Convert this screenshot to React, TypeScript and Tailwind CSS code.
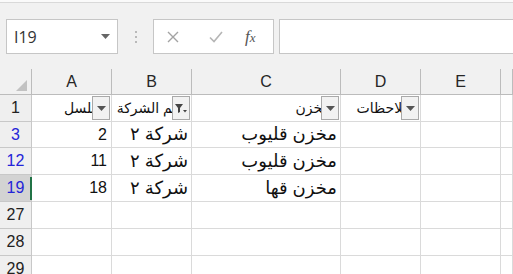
import React from "react";

// Excel sheet snippet: formula bar on top, filtered table with Arabic headers.
const cols = ["A", "B", "C", "D", "E", ""];

type Row = {
  num: string;
  blue?: boolean;
  selected?: boolean;
  cells: string[];
};

const rows: Row[] = [
  { num: "1", cells: ["تسلسل", "اسم الشركة", "مخزن", "ملاحظات", "", ""] },
  { num: "3", blue: true, cells: ["2", "شركة ٢", "مخزن قليوب", "", "", ""] },
  { num: "12", blue: true, cells: ["11", "شركة ٢", "مخزن قليوب", "", "", ""] },
  { num: "19", blue: true, selected: true, cells: ["18", "شركة ٢", "مخزن قها", "", "", ""] },
  { num: "27", cells: ["", "", "", "", "", ""] },
  { num: "28", cells: ["", "", "", "", "", ""] },
  { num: "29", cells: ["", "", "", "", "", ""] },
];

// right padding of the header labels, so the filter button hides the same part as in Excel
const headerPad = ["pr-[3px]", "pr-[3px]", "pr-[10px]", "pr-[10px]"];

function FilterButton({ active }: { active?: boolean }) {
  return (
    <div className="absolute right-[1px] top-[1px] flex h-[24px] w-[18px] items-center justify-center border border-[#a9a9a9] bg-[#f2f2f2]">
      {active ? (
        <svg width="14" height="12" viewBox="0 0 14 12">
          <path d="M1 2h8L6 6v4L4 11V6z" fill="#444" />
          <path d="M9 8h4l-2 2.5z" fill="#444" />
        </svg>
      ) : (
        <svg width="9" height="5" viewBox="0 0 9 5">
          <path d="M0 0h9L4.5 5z" fill="#555" />
        </svg>
      )}
    </div>
  );
}

export default function App() {
  return (
    <div
      className="h-[274px] w-[513px] overflow-hidden bg-[#f1f1f1] text-[#222]"
      style={{ fontFamily: '"Liberation Sans", "DejaVu Sans", sans-serif' }}
    >
      {/* top ribbon edge */}
      <div className="h-[2px] bg-[#fafafa]" />
      <div className="h-[1px] bg-[#d9d9d9]" />

      {/* formula bar */}
      <div className="mt-[16px] flex h-[35px] items-stretch">
        <div className="ml-[6px] flex w-[112px] items-center justify-between border border-[#c6c6c6] bg-white pl-[7px] pr-[7px]">
          <span className="text-[16px] text-[#333]" style={{ fontFamily: '"Open Sans", sans-serif' }}>
            I19
          </span>
          <svg width="9" height="5" viewBox="0 0 9 5">
            <path d="M0 0h9L4.5 5z" fill="#666" />
          </svg>
        </div>
        <div className="flex w-[35px] flex-col items-center justify-center gap-[3px]">
          <span className="h-[2px] w-[2px] rounded-full bg-[#a6a6a6]" />
          <span className="h-[2px] w-[2px] rounded-full bg-[#a6a6a6]" />
          <span className="h-[2px] w-[2px] rounded-full bg-[#a6a6a6]" />
        </div>
        <div className="flex w-[121px] items-center border border-[#c6c6c6] bg-white">
          <svg className="ml-[13px]" width="12" height="12" viewBox="0 0 12 12">
            <path d="M1 1l10 10M11 1L1 11" stroke="#a3a3a3" strokeWidth="1.4" />
          </svg>
          <svg className="ml-[30px]" width="14" height="12" viewBox="0 0 14 12">
            <path d="M1 6.5l4 4L13 1" stroke="#b5b5b5" strokeWidth="1.6" fill="none" />
          </svg>
          <span
            className="ml-[22px] text-[17px] italic text-[#555]"
            style={{ fontFamily: '"Liberation Serif", serif' }}
          >
            f<span className="text-[13px]">x</span>
          </span>
        </div>
        <div className="ml-[5px] flex-1 border border-r-0 border-[#c6c6c6] bg-white" />
      </div>

      {/* sheet */}
      <div className="mt-[15px] grid grid-cols-[32px_80px_80px_149px_80px_80px_1fr] grid-rows-[26px_27px_26px_27px_27px_27px_27px_27px]">
        {/* corner */}
        <div className="relative border-b border-r border-[#bcbcbc]">
          <svg className="absolute left-[16px] top-[11px]" width="11" height="11" viewBox="0 0 11 11">
            <path d="M11 0v11H0z" fill="#c2c2c2" />
          </svg>
        </div>
        {cols.map((c, i) => (
          <div
            key={i}
            className="flex items-center justify-center border-b border-r border-[#bcbcbc] text-[16px] text-[#262626]"
          >
            {c}
          </div>
        ))}

        {rows.map((r, ri) => (
          <React.Fragment key={ri}>
            <div
              className={`relative flex items-center justify-center border-b border-r border-[#c8c8c8] text-[16px] ${
                r.selected ? "bg-[#d3d3d3]" : "bg-[#efefef]"
              } ${r.blue ? "text-[#2424d8]" : "text-[#222]"}`}
            >
              {r.num}
              {r.selected && <div className="absolute right-[-1px] top-[2px] h-[23px] w-[2px] bg-[#217346]" />}
            </div>
            {r.cells.map((v, ci) => {
              const header = ri === 0 && ci < 4;
              const isNum = /^\d+$/.test(v);
              const size = isNum ? "text-[16px]" : header ? "text-[14px]" : "text-[18px]";
              const pad = isNum ? "justify-end pr-[4px]" : header ? `justify-start ${headerPad[ci]}` : "justify-start pr-[3px]";
              return (
                <div
                  key={ci}
                  dir={v && !isNum ? "rtl" : undefined}
                  className={`relative flex items-center overflow-hidden whitespace-nowrap border-b border-r border-[#dadada] bg-white text-[#111] ${size} ${pad}`}
                >
                  {v}
                  {header && <FilterButton active={ci === 1} />}
                </div>
              );
            })}
          </React.Fragment>
        ))}
      </div>
    </div>
  );
}
